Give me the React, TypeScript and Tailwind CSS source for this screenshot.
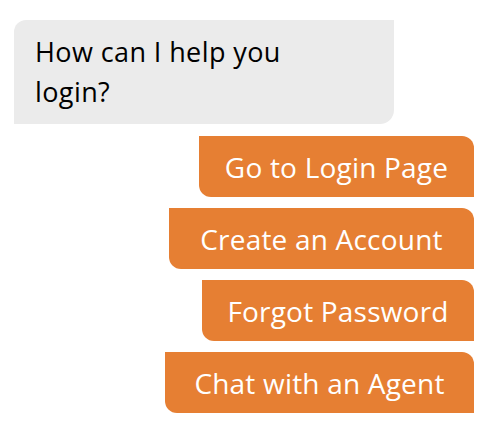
const options = ["Go to Login Page", "Create an Account", "Forgot Password", "Chat with an Agent"];

const widths: Record<string, string> = {
    "Go to Login Page": "w-[275px]",
    "Create an Account": "w-[305px]",
    "Forgot Password": "w-[272px]",
    "Chat with an Agent": "w-[309px]",
};

export default function App() {
    return (
        <div
            className="w-[490px] h-[432px] bg-white pt-[20px] pl-[14px] pr-[16px]"
            style={{ fontFamily: '"Open Sans", "Noto Sans", sans-serif' }}
        >
            <div className="w-[380px] bg-[#ebebeb] rounded-tl-[12px] rounded-br-[14px] pl-[21px] py-[12px] text-[27px] leading-[40px] tracking-[0.4px] text-black">
                <p className="w-[300px]">How can I help you login?</p>
            </div>
            <div className="flex flex-col items-end gap-[11px] mt-[12px]">
                {options.map((label) => (
                    <button
                        key={label}
                        className={`${widths[label]} h-[61px] bg-[#e67f33] text-white text-[28px] font-medium leading-[36px] tracking-[0.2px] rounded-tr-[12px] rounded-bl-[12px] flex items-center justify-center`}
                    >
                        {label}
                    </button>
                ))}
            </div>
        </div>
    );
}
